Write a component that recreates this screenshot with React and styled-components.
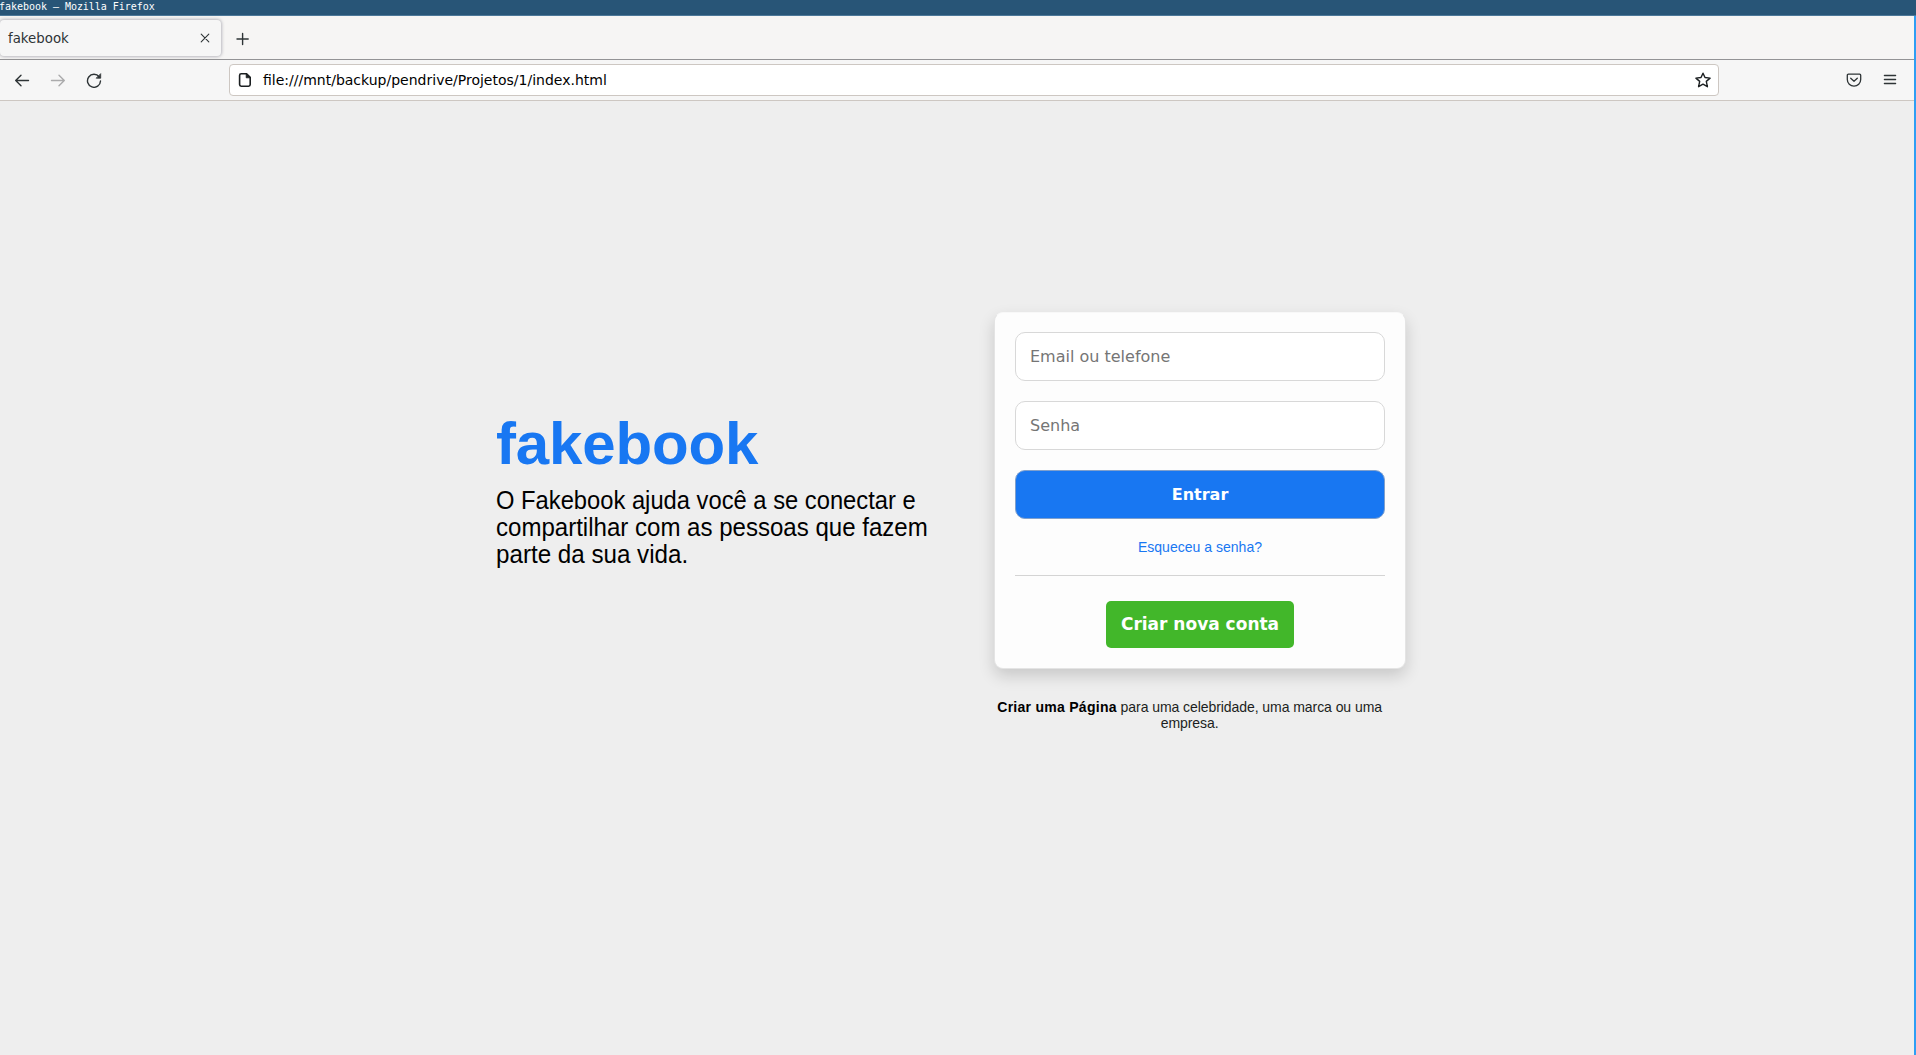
import React from 'react';
import styled, { createGlobalStyle } from 'styled-components';

const GlobalStyle = createGlobalStyle`
  * { box-sizing: border-box; }
  body { margin: 0; background: #eeeeee; }
  button, input { font: inherit; }
`;

const ui = '"DejaVu Sans", sans-serif';
const body = '"Liberation Sans", Arial, sans-serif';

const Window = styled.div`
  display: flex;
  flex-direction: column;
  height: 1055px;
  overflow: hidden;
  background: #eeeeee;
`;

const TitleBar = styled.header`
  height: 16px;
  flex: none;
  background: #285577;
  border-bottom: 1px solid #4c7899;
  color: #ffffff;
  font: 10px/13px "DejaVu Sans Mono", monospace;
  letter-spacing: -0.03px;
  white-space: pre;
  text-indent: -1px;
`;

const Frame = styled.div`
  flex: 1;
  display: flex;
  flex-direction: column;
  border-right: 2px solid #2e9ef4;
`;

const TabStrip = styled.div`
  display: flex;
  align-items: flex-start;
  height: 44px;
  padding-top: 4px;
  background: #f6f5f4;
  border-bottom: 1px solid #939395;
`;

const Tab = styled.div`
  display: flex;
  align-items: center;
  justify-content: space-between;
  width: 221px;
  height: 36px;
  padding: 0 8px;
  border-radius: 4px;
  background: #f6f6f6;
  box-shadow: 0 0 3px 1px rgba(128, 128, 142, 0.5);
  color: #2e3436;
  font: 13.33px ${ui};
`;

const IconButton = styled.button`
  display: grid;
  place-items: center;
  width: ${(p) => p.$w || 36}px;
  height: ${(p) => p.$h || 36}px;
  padding: 0;
  border: 0;
  background: none;
  color: ${(p) => (p.$dim ? '#ababac' : '#2e3436')};
`;

const Icon = styled.svg.attrs({ viewBox: '0 0 16 16' })`
  display: block;
  width: 16px;
  height: 16px;
  flex: none;
  fill: none;
  stroke: currentColor;
  stroke-width: ${(p) => p.$stroke || 1.3};
  stroke-linecap: round;
  stroke-linejoin: round;
`;

const Toolbar = styled.nav`
  display: flex;
  align-items: center;
  height: 41px;
  padding: 0 6px 0 4px;
  background: #f6f6f6;
  border-bottom: 1px solid #cdc7c2;
`;

const UrlBar = styled.div`
  display: flex;
  align-items: center;
  gap: 10px;
  width: 1490px;
  height: 32px;
  margin: 0 auto 0 117px;
  padding: 0 7px;
  border: 1px solid #cdc7c2;
  border-radius: 4px;
  background: #ffffff;
  color: #1b1f21;
  font: 14px ${ui};
`;

const Url = styled.span`
  flex: 1;
  color: #000000;
`;

const Page = styled.main`
  flex: 1;
  display: flex;
  align-items: flex-start;
  gap: 60px;
  padding: 211px 0 0 496px;
  background: #eeeeee;
  font-family: ${body};
`;

const Intro = styled.section`
  width: 438px;
  padding-top: 97px;
`;

const Brand = styled.h1`
  margin: 0 0 9px;
  color: #1877f2;
  font-size: 60px;
  line-height: 69px;
  letter-spacing: -0.15px;
`;

const Slogan = styled.p`
  margin: 0;
  color: #000000;
  font-size: 25.5px;
  line-height: 27px;
`;

const SloganLine = styled.span`
  display: block;
  white-space: nowrap;
  transform: scaleX(${(p) => p.$squeeze});
  transform-origin: left;
`;

const Access = styled.section`
  width: 412px;
`;

const Card = styled.form`
  display: flex;
  flex-direction: column;
  gap: 20px;
  width: 412px;
  height: 357px;
  padding: 19px 20px 0;
  border: 1px solid #e4e4e4;
  border-top-color: #f8f8f8;
  border-radius: 9px;
  background: #fdfdfd;
  box-shadow: 0 7px 16px rgba(0, 0, 0, 0.16);
`;

const Field = styled.input`
  height: 49px;
  padding: 0 14px;
  border: 1px solid #d8d8d8;
  border-radius: 10px;
  outline: none;
  background: #ffffff;
  font: 16px ${ui};
  &::placeholder { color: #757575; opacity: 1; }
`;

const Submit = styled.button`
  height: 49px;
  border: 1px solid #80a0cc;
  border-radius: 10px;
  background: #1877f2;
  color: #ffffff;
  font: bold 16px ${ui};
`;

const Forgot = styled.a`
  height: 16px;
  color: #1877f2;
  font-size: 15px;
  line-height: 16px;
  text-align: center;
  transform: scaleX(0.936);
`;

const Divider = styled.hr`
  width: 100%;
  height: 1px;
  margin: 0 0 5px;
  border: 0;
  background: #d4d4d4;
`;

const Create = styled.button`
  align-self: center;
  width: 188px;
  height: 47px;
  padding: 0 0 2px;
  border: 0;
  border-radius: 5px;
  background: #42b72a;
  color: #ffffff;
  font: bold 17px ${ui};
  white-space: nowrap;
`;

const PageNote = styled.p`
  width: 418px;
  margin: 30px 0 0;
  color: #1c1e21;
  font-size: 15px;
  line-height: 16px;
  letter-spacing: -0.09px;
  text-align: center;
  transform: scaleX(0.936);
  transform-origin: left;
  b { color: #000000; letter-spacing: 0.27px; }
`;

export default function App() {
  return (
    <Window>
      <GlobalStyle />
      <TitleBar>fakebook — Mozilla Firefox</TitleBar>
      <Frame>
        <TabStrip>
          <Tab>
            fakebook
            <Icon $stroke={1.1}><path d="M4.2 4.2l7.6 7.6M11.8 4.2l-7.6 7.6" /></Icon>
          </Tab>
          <IconButton $w={43} $h={37} aria-label="Nova aba">
            <Icon $stroke={1.4}><path d="M7.6 2.4v11.2M2 8h11.2" /></Icon>
          </IconButton>
        </TabStrip>
        <Toolbar>
          <IconButton aria-label="Voltar">
            <Icon $stroke={1.4}><path d="M14.5 8.5H1.7M7 3.2L1.7 8.5 7 13.8" /></Icon>
          </IconButton>
          <IconButton $dim aria-label="Avançar">
            <Icon $stroke={1.4}><path d="M1.5 8.5h12.8M9 3.2L14.3 8.5 9 13.8" /></Icon>
          </IconButton>
          <IconButton aria-label="Recarregar">
            <Icon $stroke={1.4}>
              <path d="M13.2 4.9A6.5 6.5 0 1 0 14.5 9" />
              <path d="M14.7 2v4.2h-4.2z" fill="currentColor" strokeWidth="0.8" />
            </Icon>
          </IconButton>
          <UrlBar>
            <Icon $stroke={1.6}>
              <path d="M4.2 1.8h5.4L13.2 5.4v7.2a1.6 1.6 0 0 1-1.6 1.6H4.2a1.6 1.6 0 0 1-1.6-1.6V3.4a1.6 1.6 0 0 1 1.6-1.6z" />
              <path d="M9.2 1.8v4h4z" fill="currentColor" strokeWidth="0.8" />
            </Icon>
            <Url>file:///mnt/backup/pendrive/Projetos/1/index.html</Url>
            <Icon $stroke={1.4}>
              <path d="M8 1.2l2 4.3 5.1.6-3.8 3.3 1.1 5.3L8 12.2l-4.4 2.5 1.1-5.3L.9 6.1 6 5.5z" />
            </Icon>
          </UrlBar>
          <IconButton aria-label="Pocket">
            <Icon>
              <path d="M2.4 2.2h11.2a1.1 1.1 0 0 1 1.1 1.1v4.2a6.7 6.7 0 0 1-13.4 0V3.3a1.1 1.1 0 0 1 1.1-1.1z" />
              <path d="M4.7 6.3L8 9.3l3.3-3" />
            </Icon>
          </IconButton>
          <IconButton aria-label="Menu">
            <Icon><path d="M2.4 3.5h11.2M2.4 7.5h11.2M2.4 11.5h11.2" /></Icon>
          </IconButton>
        </Toolbar>
        <Page>
          <Intro>
            <Brand>fakebook</Brand>
            <Slogan>
              <SloganLine $squeeze={0.931}>O Fakebook ajuda você a se conectar e</SloganLine>
              <SloganLine $squeeze={0.943}>compartilhar com as pessoas que fazem</SloganLine>
              <SloganLine $squeeze={0.948}>parte da sua vida.</SloganLine>
            </Slogan>
          </Intro>
          <Access>
            <Card>
              <Field type="text" placeholder="Email ou telefone" />
              <Field type="password" placeholder="Senha" />
              <Submit type="button">Entrar</Submit>
              <Forgot>Esqueceu a senha?</Forgot>
              <Divider />
              <Create type="button">Criar nova conta</Create>
            </Card>
            <PageNote>
              <b>Criar uma Página</b> para uma celebridade, uma marca ou uma empresa.
            </PageNote>
          </Access>
        </Page>
      </Frame>
    </Window>
  );
}
